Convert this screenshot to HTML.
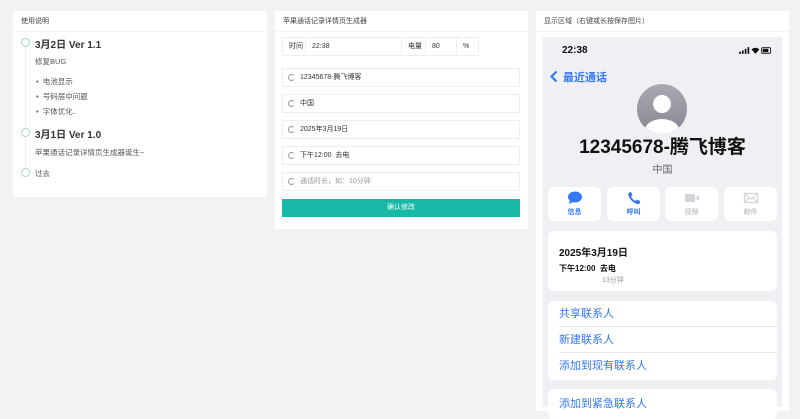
<!DOCTYPE html>
<html><head><meta charset="utf-8"><style>
*{margin:0;padding:0;box-sizing:border-box}
body{width:800px;height:402px;overflow:hidden;background:#f2f2f2;font-family:"Liberation Sans","Noto Sans CJK SC",sans-serif;color:#333;position:relative}
.card{position:absolute;background:#fff;top:11px}
.ct{height:21px;border-bottom:1px solid #f3f3f3;font-size:7px;line-height:21px;padding-left:8px;color:#444}
.abs{position:absolute}
.circ{position:absolute;width:9px;height:9px;border:1.5px solid #9ed8c4;border-radius:50%;background:#fff}
.t{position:absolute;font-size:7.5px;color:#555;white-space:nowrap}
.h{position:absolute;font-size:10px;font-weight:bold;color:#333;white-space:nowrap}
.inp{position:absolute;left:7px;width:238px;height:19px;border:1px solid #eee;font-size:7px;line-height:17px;padding-left:17px;color:#333}
.inp i{position:absolute;left:5px;top:5px;width:7px;height:7px;border:1px solid #999;border-radius:50%;border-right-color:transparent}
.cell{position:absolute;top:26px;height:19px;border:1px solid #eee;font-size:7px;line-height:17px;padding-left:6px}
.btn{position:absolute;width:53px;height:34px;top:187px;background:#fff;border-radius:6px;text-align:center;font-size:7px;font-weight:bold}
.row{position:absolute;left:11px;right:0;height:26px;font-size:11px;color:#3478f6;line-height:26px}
</style></head><body>
<div class="card" style="left:13px;width:254px;height:186px">
 <div class="ct">使用说明</div>
 <div class="abs" style="left:12px;top:35px;width:1px;height:126px;background:#eee"></div>
 <div class="circ" style="left:8px;top:27px"></div><div class="h" style="left:22px;top:25px">3月2日 Ver 1.1</div>
 <div class="t" style="left:22px;top:45px">修复BUG</div>
 <div class="t" style="left:23px;top:65px">•&nbsp; 电池显示</div>
 <div class="t" style="left:23px;top:80px">•&nbsp; 号码居中问题</div>
 <div class="t" style="left:23px;top:95px">•&nbsp; 字体优化..</div>
 <div class="circ" style="left:8px;top:117px"></div><div class="h" style="left:22px;top:115px">3月1日 Ver 1.0</div>
 <div class="t" style="left:22px;top:136px">苹果通话记录详情页生成器诞生~</div>
 <div class="circ" style="left:8px;top:157px"></div><div class="t" style="left:22px;top:157px">过去</div>
</div>
<div class="card" style="left:275px;width:253px;height:218px">
 <div class="ct">苹果通话记录详情页生成器</div>
 <div class="cell" style="left:7px;width:24px">时间</div>
 <div class="cell" style="left:30px;width:97px">22:38</div>
 <div class="cell" style="left:126px;width:25px">电量</div>
 <div class="cell" style="left:150px;width:32px">80</div>
 <div class="cell" style="left:181px;width:23px">%</div>
 <div class="inp" style="top:57px"><i></i>12345678-腾飞博客</div>
 <div class="inp" style="top:83px"><i></i>中国</div>
 <div class="inp" style="top:109px"><i></i>2025年3月19日</div>
 <div class="inp" style="top:135px"><i></i>下午12:00&nbsp; 去电</div>
 <div class="inp" style="top:161px;color:#999"><i></i>通话时长，如：10分钟</div>
 <div class="abs" style="left:7px;top:188px;width:238px;height:18px;background:#17b9a6;color:#fff;font-size:7px;text-align:center;line-height:18px">确认修改</div>
</div>
<div class="card" style="left:536px;width:253px;height:400px">
 <div class="ct">显示区域（右键或长按保存图片）</div>
</div>
<div class="abs" style="left:543px;top:37px;width:239px;height:370px;background:#efeff4">
 <div class="abs" style="left:19px;top:8px;font-size:10px;font-weight:bold;color:#111">22:38</div>
 <svg class="abs" style="left:196px;top:9px" width="34" height="9" viewBox="0 0 30 8"><rect x="0" y="5" width="1.5" height="2" fill="#111"/><rect x="2.5" y="4" width="1.5" height="3" fill="#111"/><rect x="5" y="2.5" width="1.5" height="4.5" fill="#111"/><rect x="7.5" y="1" width="1.5" height="6" fill="#111"/><path d="M11 3 Q14.5 0 18 3 L14.5 7Z" fill="#111"/><rect x="20" y="1.5" width="8" height="5" rx="1" fill="none" stroke="#111" stroke-width=".8"/><rect x="21" y="2.5" width="5" height="3" fill="#111"/></svg>
 <svg class="abs" style="left:7px;top:33px" width="8" height="13"><path d="M6.5 1.5 L1.5 6.5 L6.5 11.5" stroke="#3478f6" stroke-width="2.2" fill="none"/></svg>
 <div class="abs" style="left:20px;top:32px;font-size:11px;color:#3478f6;font-weight:bold">最近通话</div>
 <svg class="abs" style="left:94px;top:47px" width="50" height="50" viewBox="0 0 50 50"><defs><linearGradient id="g" x1="0" y1="0" x2="0" y2="1"><stop offset="0" stop-color="#a8a9b1"/><stop offset="1" stop-color="#878891"/></linearGradient><clipPath id="c"><circle cx="25" cy="25" r="25"/></clipPath></defs><circle cx="25" cy="25" r="25" fill="url(#g)"/><circle cx="25" cy="20" r="9" fill="#fff"/><ellipse cx="25" cy="46" rx="17" ry="11" fill="#fff" clip-path="url(#c)"/></svg>
 <div class="abs" style="left:0;width:239px;top:99px;text-align:center;font-size:19px;font-weight:bold;color:#111;line-height:24px">12345678-腾飞博客</div>
 <div class="abs" style="left:0;width:239px;top:124px;text-align:center;font-size:10px;color:#666">中国</div>
</div>
<div class="btn" style="left:548px;color:#3478f6"><svg width="16" height="14" style="margin-top:4px" viewBox="0 0 16 14"><ellipse cx="8" cy="6" rx="7" ry="5.5" fill="#3478f6"/><path d="M3 9 L2 13 L7 10.5Z" fill="#3478f6"/></svg><div>信息</div></div>
<div class="btn" style="left:607px;color:#3478f6"><svg width="14" height="14" style="margin-top:4px" viewBox="0 0 14 14"><path d="M2 1.5 Q0.5 3 2 6 Q5 11.5 10 13 Q12 13.5 13 12 L13 10 L10 8.5 L8.5 10 Q5.5 8.5 4 5.5 L5.5 4 L4 1Z" fill="#3478f6"/></svg><div>呼叫</div></div>
<div class="btn" style="left:665px;color:#c8c8cc"><svg width="16" height="14" style="margin-top:4px"><rect x="1" y="3" width="10" height="8" rx="1.5" fill="#d3d3d8"/><path d="M11 7 L15 4 L15 10Z" fill="#d3d3d8"/></svg><div>视频</div></div>
<div class="btn" style="left:724px;color:#c8c8cc"><svg width="16" height="14" style="margin-top:4px"><rect x="1.5" y="2.5" width="13" height="9" fill="none" stroke="#d3d3d8" stroke-width="1.3"/><path d="M1.5 2.5 L8 8 L14.5 2.5 M1.5 11.5 L6 7 M14.5 11.5 L10 7" fill="none" stroke="#d3d3d8" stroke-width="1.1"/></svg><div>邮件</div></div>
<div class="abs" style="left:548px;top:231px;width:229px;height:60px;background:#fff;border-radius:6px">
 <div class="abs" style="left:11px;top:13px;font-size:10px;font-weight:bold;color:#111">2025年3月19日</div>
 <div class="abs" style="left:11px;top:32px;font-size:8px;font-weight:bold;color:#111">下午12:00&nbsp;&nbsp;去电</div>
 <div class="abs" style="left:54px;top:44px;font-size:7px;color:#999">13分钟</div>
</div>
<div class="abs" style="left:548px;top:301px;width:229px;height:79px;background:#fff;border-radius:6px">
 <div class="row" style="top:0;border-bottom:1px solid #e5e5ea">共享联系人</div>
 <div class="row" style="top:26px;border-bottom:1px solid #e5e5ea">新建联系人</div>
 <div class="row" style="top:52px">添加到现有联系人</div>
</div>
<div class="abs" style="left:548px;top:389px;width:229px;height:30px;background:#fff;border-radius:6px">
 <div class="row" style="top:2px">添加到紧急联系人</div>
</div>
</body></html>
